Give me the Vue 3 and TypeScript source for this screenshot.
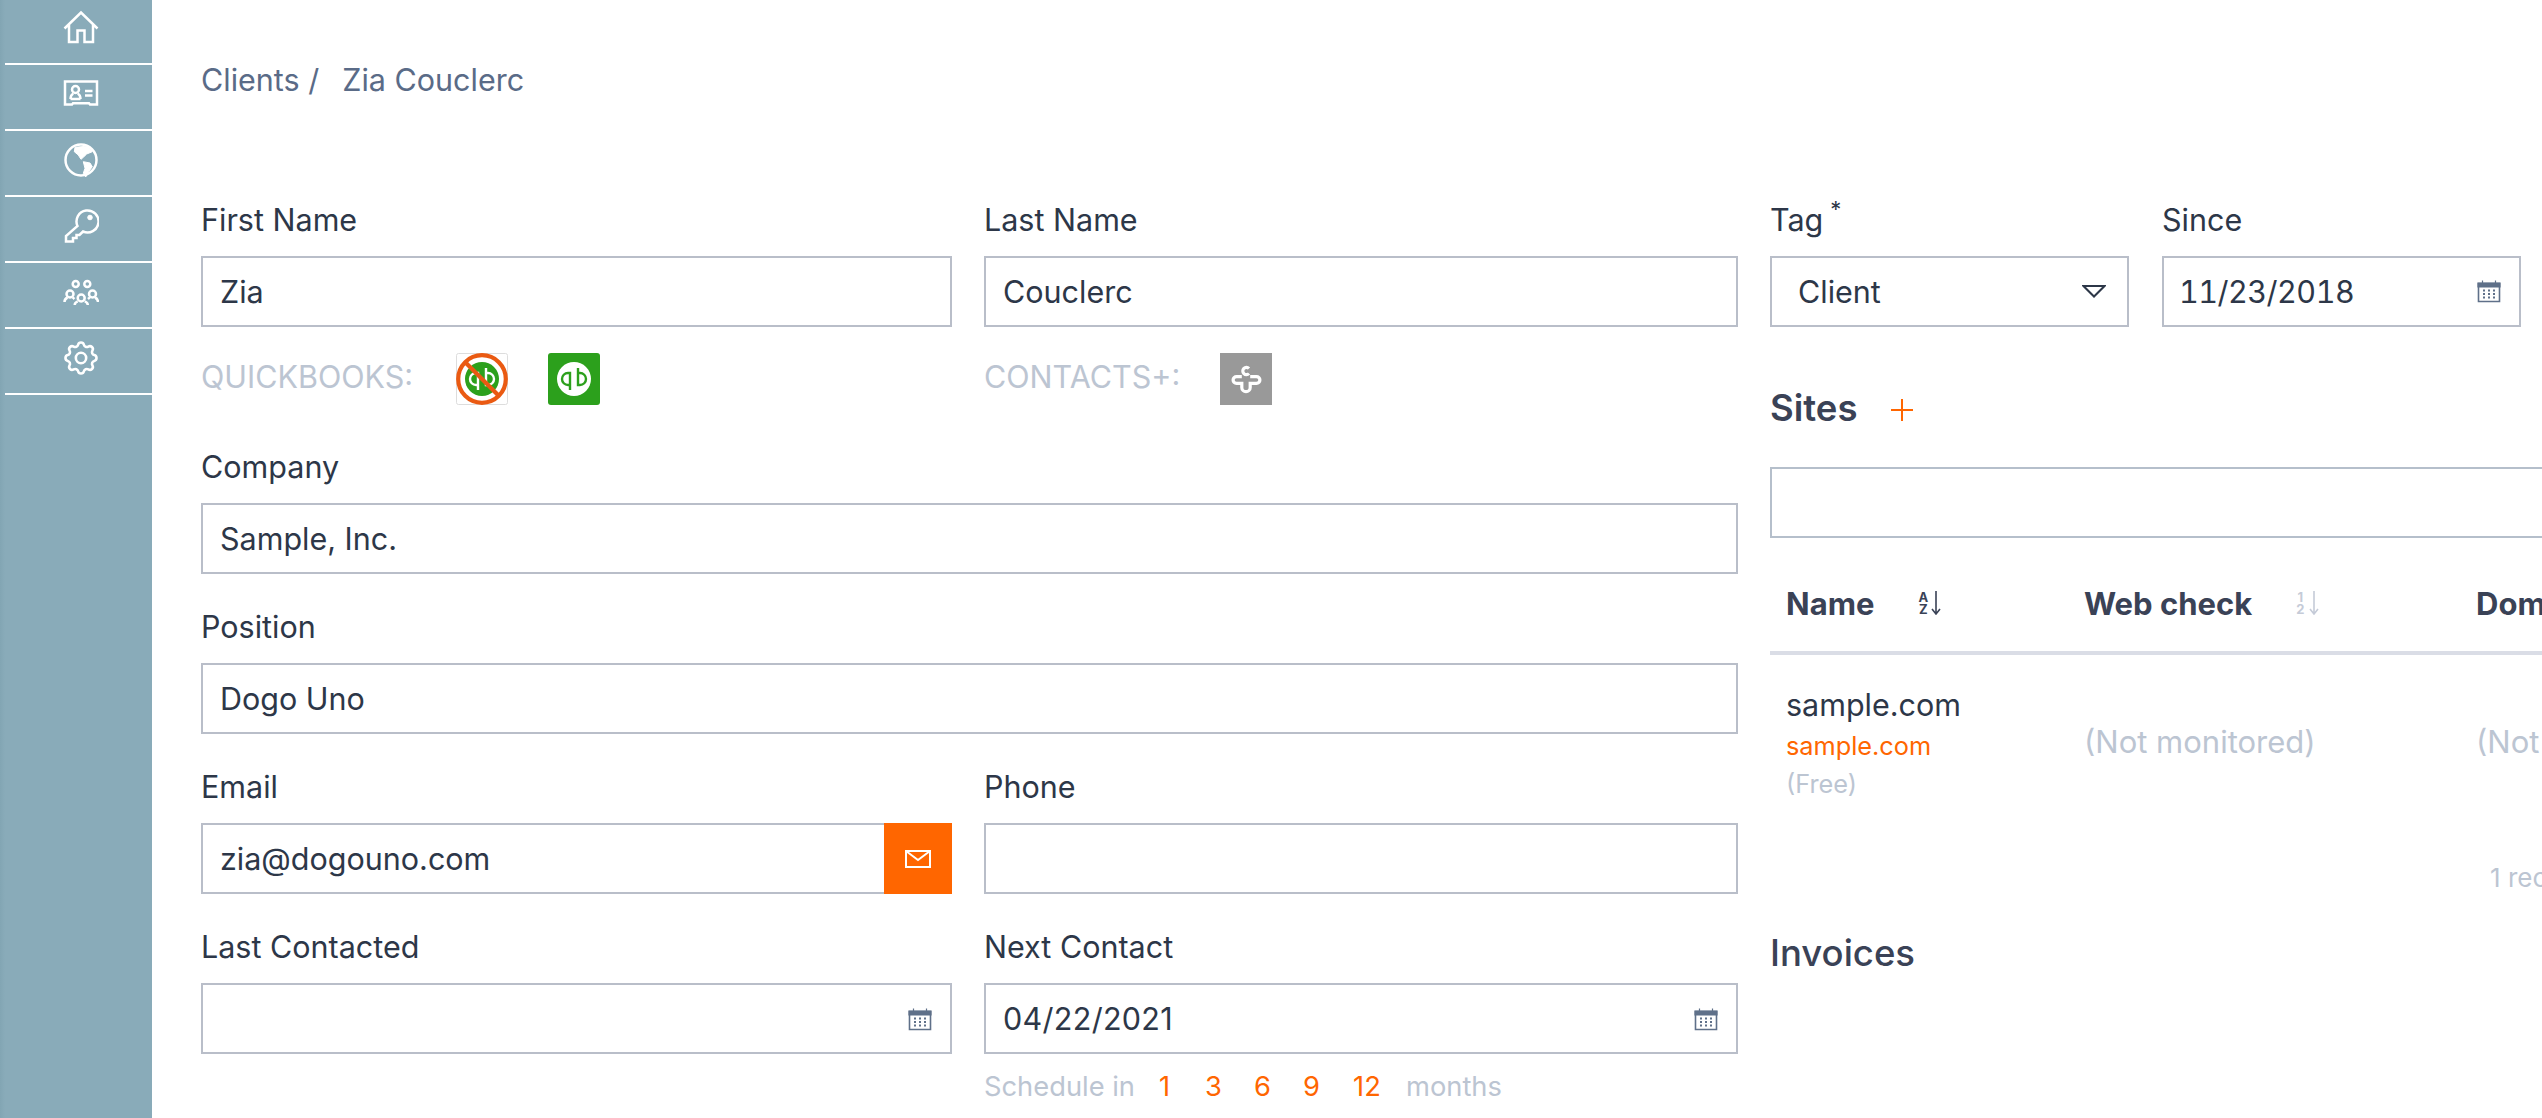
<script setup lang="ts">
const months: number[] = [1, 3, 6, 9, 12]
</script>

<template>
  <div class="app">
    <aside class="sidebar">
      <a class="nav-item">
        <svg class="nav-icon" viewBox="0 0 36 36"><path d="M1.500 19.500 18 3.500l16.500 16M6 16v17h8.500V21.500h7V33H30V16" /></svg>
      </a>
      <a class="nav-item">
        <svg class="nav-icon" viewBox="0 0 36 36">
          <path d="M2 5.500h32v23h-7l-1-1.200H10l-1 1.200H2z" />
          <circle cx="12.500" cy="13.500" r="3.500" />
          <path d="M7.500 23c0-3 1-4.500 2.800-5.500M17.500 23c0-3-1-4.500-2.800-5.500M7.500 23h10M22 15h7.500M22 19.500h7.500" />
        </svg>
      </a>
      <a class="nav-item">
        <svg class="nav-icon" viewBox="0 0 36 36">
          <circle cx="18" cy="18" r="15.500" />
          <path class="solid" d="M12 5.300 25.300 4l4 5.700-5.600 2.300-3.400 3.300-2.300 2-2.700-4.300-4-3.300z" />
          <path class="solid" d="M20.300 19.700 27 21l2.300 3.700-3.600 5-3 5.300-2.400-3.700 1.700-5z" />
        </svg>
      </a>
      <a class="nav-item">
        <svg class="nav-icon" viewBox="0 0 36 36">
          <path d="M14.500 18A11 11 0 1 1 20 23.500L16.500 27h-3v3H10v3.500H3V28z" />
          <circle class="solid" cx="27" cy="9.500" r="2.300" />
        </svg>
      </a>
      <a class="nav-item">
        <svg class="nav-icon" viewBox="0 0 36 36">
          <circle cx="12.700" cy="10" r="3" />
          <circle cx="24.300" cy="10" r="3" />
          <circle cx="7" cy="20" r="3.500" />
          <circle cx="29.500" cy="20" r="3.500" />
          <circle cx="18.200" cy="24" r="3.500" />
          <path d="M1.500 28c0-2.500 1.500-3.800 3-4.500M9.500 23.500c1 .5 1.500 1 2 1.500M35 28c0-2.500-1.500-3.800-3-4.500M27 23.500c-1 .5-1.500 1-2 1.500M11.700 31c0-2 1.300-3 3-3.700M24.800 31c0-2-1.300-3-3-3.700" />
        </svg>
      </a>
      <a class="nav-item">
        <svg class="nav-icon gear" viewBox="0 0 24 24">
          <path d="M10.325 4.317c.426-1.756 2.924-1.756 3.350 0a1.724 1.724 0 002.573 1.066c1.543-.940 3.310.826 2.370 2.370a1.724 1.724 0 001.065 2.572c1.756.426 1.756 2.924 0 3.350a1.724 1.724 0 00-1.066 2.573c.940 1.543-.826 3.310-2.370 2.370a1.724 1.724 0 00-2.572 1.065c-.426 1.756-2.924 1.756-3.350 0a1.724 1.724 0 00-2.573-1.066c-1.543.940-3.310-.826-2.370-2.370a1.724 1.724 0 00-1.065-2.572c-1.756-.426-1.756-2.924 0-3.350a1.724 1.724 0 001.066-2.573c-.940-1.543.826-3.310 2.370-2.370.996.608 2.296.070 2.572-1.065z" />
          <circle cx="12" cy="12" r="3" />
        </svg>
      </a>
    </aside>

    <main class="main">
      <nav class="crumbs">
        <span>Clients /</span>
        <span>Zia Couclerc</span>
      </nav>

      <div class="content">
        <form class="details">
          <div class="field">
            <label class="label">First Name</label>
            <input class="input" value="Zia" readonly />
            <div class="meta">
              <span class="meta-label">QUICKBOOKS:</span>
              <svg class="badge first-badge" viewBox="0 0 52 52">
                <rect x=".5" y=".5" width="51" height="51" rx="2" fill="#fff" stroke="#ddd" />
                <circle cx="26" cy="26" r="17" fill="#2ca01c" />
                <path class="qb" d="M22 37V20h-2a6 6 0 0 0 0 12h1M30 15v17h2a6 6 0 0 0 0-12h-1" />
                <circle cx="26" cy="26" r="23.800" fill="none" stroke="#ea5a12" stroke-width="4.200" />
                <path d="M9.500 9.500l33 33" stroke="#ea5a12" stroke-width="4.200" />
              </svg>
              <svg class="badge" viewBox="0 0 52 52">
                <rect width="52" height="52" rx="3" fill="#2ca01c" />
                <circle cx="26" cy="26" r="17" fill="#fff" />
                <path class="qb green" d="M22 37V20h-2a6 6 0 0 0 0 12h1M30 15v17h2a6 6 0 0 0 0-12h-1" />
              </svg>
            </div>
          </div>
          <div class="field">
            <label class="label">Last Name</label>
            <input class="input" value="Couclerc" readonly />
            <div class="meta">
              <span class="meta-label contacts-label">CONTACTS+:</span>
              <svg class="badge" viewBox="0 0 52 52">
                <rect width="52" height="52" fill="#999" />
                <path class="contact" d="M21.800 23.600H16.500a3.400 3.400 0 0 0 0 6.800h5.300v4a4.200 4.200 0 0 0 8.400 0v-4h6.300a3.400 3.400 0 0 0 0-6.800H30.200" />
                <path class="contact" d="M29 15.500a3.600 3.600 0 1 0 0 5" />
              </svg>
            </div>
          </div>

          <div class="field wide">
            <label class="label">Company</label>
            <input class="input" value="Sample, Inc." readonly />
          </div>
          <div class="field wide">
            <label class="label">Position</label>
            <input class="input" value="Dogo Uno" readonly />
          </div>

          <div class="field">
            <label class="label">Email</label>
            <div class="input-wrap">
              <input class="input" value="zia@dogouno.com" readonly />
              <button type="button" class="mail-btn">
                <svg viewBox="0 0 26 18" width="26" height="18"><path d="M1 1h24v16H1zM1 1l12 9 12-9" fill="none" stroke="#fff" stroke-width="2" /></svg>
              </button>
            </div>
          </div>
          <div class="field">
            <label class="label">Phone</label>
            <input class="input" readonly />
          </div>

          <div class="field">
            <label class="label">Last Contacted</label>
            <div class="input-wrap">
              <input class="input" readonly />
              <svg class="calendar" viewBox="0 0 24 24">
                <path class="cal-frame" d="M1.500 4.500h21v18h-21z" />
                <path class="cal-head" d="M1 4h22v4H1zM5.500 1.500v3M18.500 1.500v3" />
                <path class="cal-dots" d="M6 11.500h2M11 11.500h2M16 11.500h2M6 15h2M11 15h2M16 15h2M6 18.500h2M11 18.500h2M16 18.500h2" />
              </svg>
            </div>
          </div>
          <div class="field">
            <label class="label">Next Contact</label>
            <div class="input-wrap">
              <input class="input next-date" value="04/22/2021" readonly />
              <svg class="calendar" viewBox="0 0 24 24">
                <path class="cal-frame" d="M1.500 4.500h21v18h-21z" />
                <path class="cal-head" d="M1 4h22v4H1zM5.500 1.500v3M18.500 1.500v3" />
                <path class="cal-dots" d="M6 11.500h2M11 11.500h2M16 11.500h2M6 15h2M11 15h2M16 15h2M6 18.500h2M11 18.500h2M16 18.500h2" />
              </svg>
            </div>
            <div class="schedule">
              <span class="schedule-lead">Schedule in</span>
              <a v-for="m in months" :key="m" class="month" :class="{ 'month-wide': m === 12 }">{{ m }}</a>
              <span class="months-word">months</span>
            </div>
          </div>
        </form>

        <section class="side">
          <div class="side-top">
            <div class="field">
              <label class="label">Tag<sup class="req">*</sup></label>
              <div class="select">
                <span>Client</span>
                <svg viewBox="0 0 24 13" width="24" height="13"><path d="M1.500 1h21L12 11.500z" fill="none" stroke="#2d3748" stroke-width="2" /></svg>
              </div>
            </div>
            <div class="field">
              <label class="label">Since</label>
              <div class="input-wrap">
                <input class="input since" value="11/23/2018" readonly />
                <svg class="calendar since-cal" viewBox="0 0 24 24">
                  <path class="cal-frame" d="M1.500 4.500h21v18h-21z" />
                  <path class="cal-head" d="M1 4h22v4H1zM5.500 1.500v3M18.500 1.500v3" />
                  <path class="cal-dots" d="M6 11.500h2M11 11.500h2M16 11.500h2M6 15h2M11 15h2M16 15h2M6 18.500h2M11 18.500h2M16 18.500h2" />
                </svg>
              </div>
            </div>
          </div>

          <h2 class="title sites">
            Sites
            <svg class="plus" viewBox="0 0 22 22" width="22" height="22"><path d="M11 0v22M0 11h22" stroke="#ff6600" stroke-width="2" /></svg>
          </h2>
          <input class="input search" readonly />

          <div class="table">
            <div class="thead">
              <div class="th">
                Name
                <span class="sort">
                  <span class="sort-chars"><span>A</span><span>Z</span></span>
                  <svg viewBox="0 0 10 24" width="10" height="24"><path d="M5 0v23M1 18l4 5 4-5" fill="none" stroke="#3a4256" stroke-width="1.600" /></svg>
                </span>
              </div>
              <div class="th">
                Web check
                <span class="sort muted">
                  <span class="sort-chars"><span>1</span><span>2</span></span>
                  <svg viewBox="0 0 10 24" width="10" height="24"><path d="M5 0v23M1 18l4 5 4-5" fill="none" stroke="#c5cbd8" stroke-width="1.600" /></svg>
                </span>
              </div>
              <div class="th">Domain</div>
            </div>
            <div class="tr">
              <div class="td first">
                <div class="site-name">sample.com</div>
                <a class="site-link">sample.com</a>
                <div class="site-plan">(Free)</div>
              </div>
              <div class="td muted-text">(Not monitored)</div>
              <div class="td muted-text">(Not monitored)</div>
            </div>
            <div class="records">1 record</div>
          </div>

          <h2 class="title invoices">Invoices</h2>
        </section>
      </div>
    </main>
  </div>
</template>

<style>
html,
body {
  margin: 0;
  overflow: hidden;
  background: #fff;
}
</style>

<style scoped>
.app {
  display: flex;
  width: 2542px;
  height: 1118px;
  overflow: hidden;
  font-family: Inter, "Liberation Sans", sans-serif;
  color: #2d3748;
}
.sidebar {
  flex: 0 0 152px;
  box-sizing: border-box;
  padding-left: 5px;
  background: linear-gradient(90deg, #82a5b3 0, #89abb9 5px);
}
.nav-item {
  display: flex;
  justify-content: center;
  box-sizing: border-box;
  height: 66px;
  padding: 11px 0 0 5px;
  border-bottom: 2px solid #fff;
}
.nav-item:first-child {
  height: 65px;
  padding-top: 9px;
}
.nav-icon {
  width: 36px;
  height: 36px;
  fill: none;
  stroke: #fff;
  stroke-width: 2.500;
}
.nav-icon.gear {
  stroke-width: 1.500;
  transform: scale(1.150);
}
.nav-icon .solid {
  fill: #fff;
  stroke: #fff;
  stroke-width: 1;
  stroke-linejoin: round;
}
.main {
  flex: 1;
  min-width: 0;
  padding: 0 21px 0 49px;
}
.crumbs {
  display: flex;
  gap: 23px;
  height: 196px;
  padding-top: 56px;
  box-sizing: border-box;
  font-size: 30.500px;
  line-height: 48px;
  color: #5a6b87;
}
.content {
  display: grid;
  grid-template-columns: 1537px 751px;
  column-gap: 32px;
}
.details {
  display: grid;
  grid-template-columns: 751px 1fr;
  column-gap: 32px;
  row-gap: 29px;
  align-content: start;
}
.field {
  min-width: 0;
}
.wide {
  grid-column: 1 / -1;
}
.label {
  display: block;
  font-size: 30.500px;
  line-height: 48px;
  margin-bottom: 12px;
}
.req {
  font-size: 22px;
  line-height: 0;
  margin-left: 7px;
  vertical-align: 14px;
}
.input {
  display: block;
  box-sizing: border-box;
  width: 100%;
  height: 71px;
  padding: 0 17px;
  border: 2px solid #b9bec9;
  border-radius: 0;
  outline: none;
  background: #fff;
  font: 400 30.500px Inter, "Liberation Sans", sans-serif;
  color: #2d3748;
}
.next-date {
  letter-spacing: 0.300px;
}
.since {
  padding-left: 15px;
  font-variant-numeric: tabular-nums;
  letter-spacing: -0.500px;
}
.input-wrap {
  position: relative;
}
.meta {
  display: flex;
  align-items: center;
  height: 52px;
  margin: 26px 0 9px;
}
.meta-label {
  width: 255px;
  margin-bottom: 6px;
  font-size: 30.500px;
  color: #bcc5d2;
}
.contacts-label {
  width: 236px;
}
.badge {
  width: 52px;
  height: 52px;
  flex: none;
}
.first-badge {
  margin-right: 40px;
}
.qb {
  fill: none;
  stroke: #fff;
  stroke-width: 2.400;
}
.qb.green {
  stroke: #2ca01c;
}
.contact {
  fill: none;
  stroke: #fff;
  stroke-width: 3.200;
}
.mail-btn {
  position: absolute;
  top: 0;
  right: 0;
  display: flex;
  align-items: center;
  justify-content: center;
  width: 68px;
  height: 71px;
  padding: 0;
  border: 0;
  background: #ff6600;
}
.calendar {
  position: absolute;
  top: 24px;
  right: 20px;
  width: 24px;
  height: 24px;
}
.since-cal {
  top: 23px;
}
.cal-frame {
  fill: none;
  stroke: #5f7089;
  stroke-width: 1.600;
}
.cal-head {
  fill: #5f7089;
  stroke: #5f7089;
  stroke-width: 1.200;
}
.cal-dots {
  fill: none;
  stroke: #5f7089;
  stroke-width: 1.800;
}
.schedule {
  display: flex;
  align-items: center;
  height: 40px;
  margin-top: 12px;
  font-size: 27.300px;
  color: #bcc5d2;
}
.schedule-lead {
  margin-right: 5px;
}
.month {
  width: 49px;
  text-align: center;
  color: #ff6600;
}
.month-wide {
  width: 62px;
}
.months-word {
  margin-left: 8px;
}
.side {
  min-width: 0;
}
.side-top {
  display: grid;
  grid-template-columns: 359px 359px;
  column-gap: 33px;
}
.select {
  display: flex;
  align-items: center;
  justify-content: space-between;
  box-sizing: border-box;
  height: 71px;
  padding: 0 21px 0 26px;
  border: 2px solid #b9bec9;
  font-size: 30.500px;
}
.title {
  margin: 0;
  font-size: 36.500px;
  font-weight: 500;
  line-height: 56px;
  color: #3a4256;
}
.sites {
  display: flex;
  align-items: center;
  gap: 34px;
  margin-top: 53px;
  font-weight: 600;
}
.plus {
  margin-top: 4px;
}
.search {
  width: 1000px;
  margin-top: 31px;
  border-color: #b5bfcb;
}
.table {
  width: 1200px;
  margin-top: 17px;
}
.thead,
.tr {
  display: grid;
  grid-template-columns: 298px 392px 510px;
}
.thead {
  height: 100px;
  border-bottom: 4px solid #dadde6;
  box-sizing: border-box;
}
.th {
  display: flex;
  align-items: center;
  padding-left: 16px;
  height: 96px;
  font-size: 31px;
  font-weight: 700;
  color: #3a4256;
}
.sort {
  display: inline-flex;
  align-items: center;
  gap: 3px;
  margin-left: 44px;
}
.sort-chars {
  display: flex;
  flex-direction: column;
  font-size: 13px;
  line-height: 12px;
  font-weight: 700;
  text-align: center;
}
.sort.muted {
  gap: 5px;
  color: #c5cbd8;
}
.tr {
  height: 172px;
}
.td {
  padding-left: 16px;
}
.td.first {
  padding-top: 28px;
}
.muted-text {
  align-self: center;
  font-size: 31px;
  color: #bcc5d2;
}
.site-name {
  font-size: 30.500px;
  line-height: 44px;
}
.site-link {
  display: block;
  font-size: 25.300px;
  line-height: 38px;
  color: #ff6600;
}
.site-plan {
  font-size: 25.300px;
  line-height: 38px;
  color: #bcc5d2;
}
.records {
  margin-top: 31px;
  padding-left: 720px;
  font-size: 26px;
  line-height: 40px;
  color: #bcc5d2;
}
.invoices {
  margin-top: 27px;
}
</style>
